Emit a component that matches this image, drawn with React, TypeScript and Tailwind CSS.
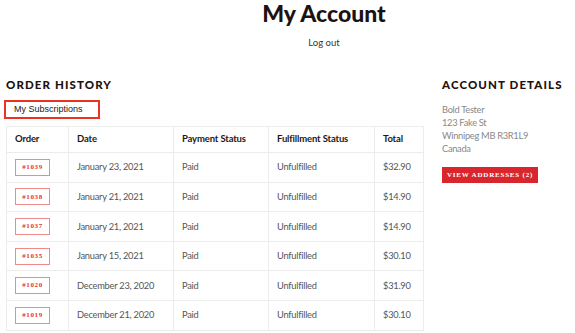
import React from "react";

const orders = [
  { id: "#1039", date: "January 23, 2021", total: "$32.90" },
  { id: "#1038", date: "January 21, 2021", total: "$14.90" },
  { id: "#1037", date: "January 21, 2021", total: "$14.90" },
  { id: "#1035", date: "January 15, 2021", total: "$30.10" },
  { id: "#1020", date: "December 23, 2020", total: "$31.90" },
  { id: "#1019", date: "December 21, 2020", total: "$30.10" },
];

const address = ["Bold Tester", "123 Fake St", "Winnipeg MB R3R1L9", "Canada"];

function OrderTable() {
  return (
    <table className="w-[417px] table-fixed border-collapse">
      <colgroup>
        <col className="w-[62px]" />
        <col className="w-[105px]" />
        <col className="w-[95px]" />
        <col className="w-[106px]" />
        <col className="w-[49px]" />
      </colgroup>
      <thead>
        <tr className="h-[26px] text-left text-[9.5px] tracking-[-0.15px] text-[#231815]">
          {["Order", "Date", "Payment Status", "Fulfillment Status", "Total"].map((h) => (
            <th key={h} className="border border-[#ececec] px-[8px] font-bold">
              {h}
            </th>
          ))}
        </tr>
      </thead>
      <tbody className="text-[9.3px] tracking-[-0.25px] text-[#555]">
        {orders.map((o) => (
          <tr key={o.id} className="h-[29.6px]">
            <td className="border border-[#ececec] px-[8px]">
              <span className="flex h-[17px] w-[35px] items-center justify-center border border-[#ee8a8a] font-['Liberation_Serif',serif] text-[7px] font-bold tracking-[0.6px] text-[#e0323a]">
                {o.id}
              </span>
            </td>
            <td className="border border-[#ececec] px-[8px]">{o.date}</td>
            <td className="border border-[#ececec] px-[8px]">Paid</td>
            <td className="border border-[#ececec] px-[8px]">Unfulfilled</td>
            <td className="border border-[#ececec] px-[8px]">{o.total}</td>
          </tr>
        ))}
      </tbody>
    </table>
  );
}

export default function App() {
  return (
    <div className="h-[333px] w-[575px] overflow-hidden bg-white font-['Lato',sans-serif]">
      <div className="w-[648px] px-[6px]">
        <header className="flex flex-col items-center pt-[1px]">
          <h1 className="text-[23px] font-black leading-[24px] text-[#1c1211]">My Account</h1>
          <a className="mt-[12px] text-[9.5px] leading-[12px] text-[#333]">Log out</a>
        </header>

        <div className="mt-[30px] flex gap-[19px]">
          <section className="w-[417px]">
            <h2 className="text-[11.5px] font-black uppercase leading-[12px] tracking-[1.1px] text-[#1c1211]">
              Order History
            </h2>
            <div className="-ml-[2px] mt-[9px] flex h-[19px] w-[96px] items-center border-2 border-[#ec3323] pl-[8px] font-['Liberation_Sans',sans-serif] text-[9px] text-[#222]">
              My Subscriptions
            </div>
            <div className="mt-[7px]">
              <OrderTable />
            </div>
          </section>

          <aside className="w-[200px]">
            <h2 className="text-[11.5px] font-black uppercase leading-[12px] tracking-[1.1px] text-[#1c1211]">
              Account Details
            </h2>
            <div className="mt-[12px] flex flex-col text-[9.3px] leading-[13px] tracking-[-0.3px] text-[#888]">
              {address.map((l) => (
                <span key={l}>{l}</span>
              ))}
            </div>
            <button className="mt-[12px] flex h-[16px] w-[96px] items-center justify-center bg-[#d9262c] font-['Liberation_Serif',serif] text-[7px] font-bold uppercase tracking-[0.8px] text-white">
              View Addresses (2)
            </button>
          </aside>
        </div>
      </div>
    </div>
  );
}
